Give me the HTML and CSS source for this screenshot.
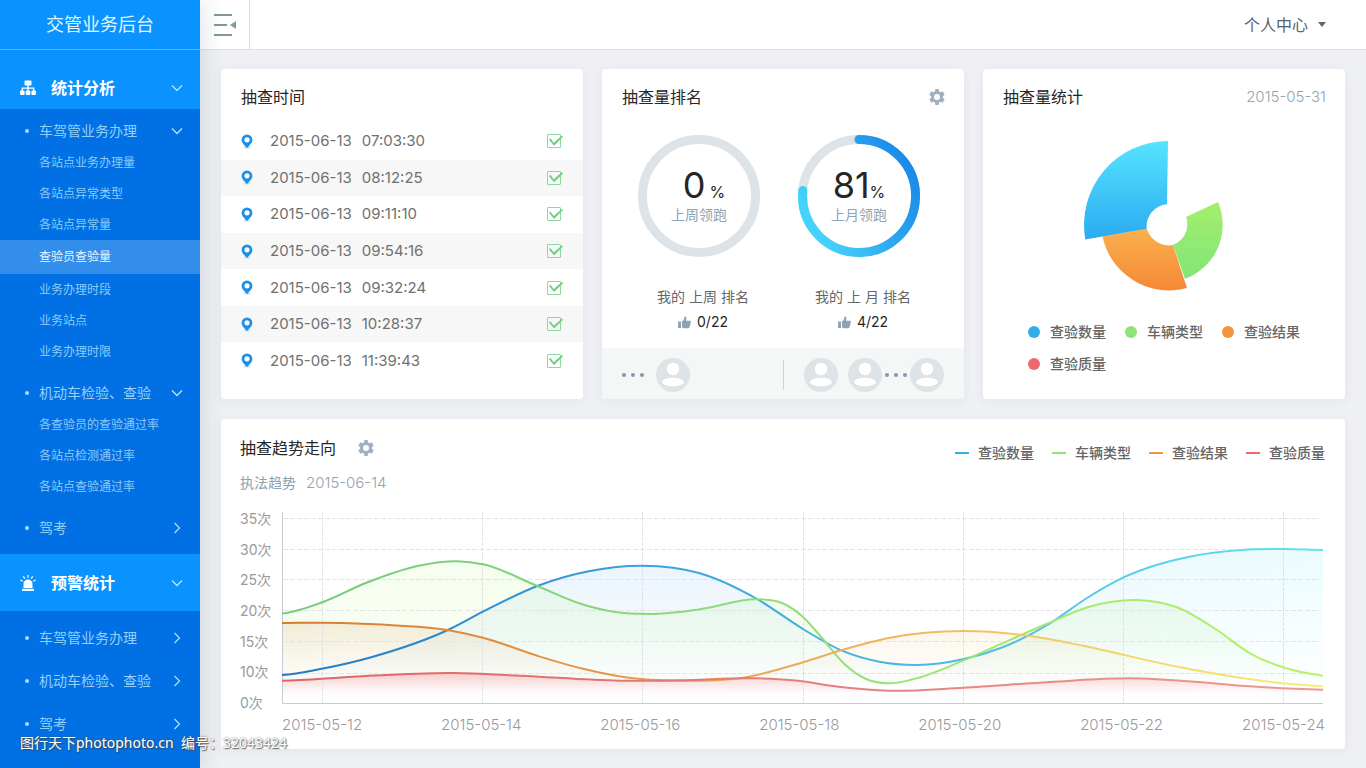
FILE: index.html
```html
<!DOCTYPE html>
<html lang="zh-CN">
<head>
<meta charset="utf-8">
<title>交管业务后台</title>
<link rel="stylesheet" href="styles.css">
</head>
<body>
<svg class="defs" width="0" height="0" aria-hidden="true">
  <symbol id="i-down" viewBox="0 0 12 8"><path d="M1 1.5l5 5 5-5" fill="none" stroke="currentColor" stroke-width="1.3"/></symbol>
  <symbol id="i-right" viewBox="0 0 8 12"><path d="M1.5 1l5 5-5 5" fill="none" stroke="currentColor" stroke-width="1.3"/></symbol>
  <symbol id="i-gear" viewBox="0 0 24 24"><path fill="currentColor" d="M20.900 12c0-.5 0-.9-.1-1.300l2.700-2.200-2.900-5-3.400 1.300c-.7-.5-1.400-.9-2.200-1.200L14.500 0h-5L9 3.600c-.8.3-1.500.7-2.200 1.200L3.400 3.500l-2.900 5 2.700 2.200c-.1.800-.1 1.800 0 2.600L.5 15.500l2.900 5 3.400-1.300c.7.5 1.400.9 2.200 1.200l.5 3.600h5l.5-3.600c.8-.3 1.500-.7 2.200-1.200l3.400 1.300 2.900-5-2.700-2.200c.1-.4.1-.8.1-1.300zM12 16.500a4.500 4.500 0 1 1 0-9 4.500 4.500 0 0 1 0 9z" fill-rule="evenodd"/></symbol>
  <symbol id="i-pin" viewBox="0 0 12 15"><ellipse cx="6" cy="13.600" rx="3.500" ry="1" fill="#bfe3fb"/><path fill="#1e8fe6" fill-rule="evenodd" d="M6 .5a5.400 5.400 0 0 1 5.400 5.400c0 3-3.200 5.600-5.400 8.100C3.800 11.500.6 8.900.6 5.900A5.400 5.400 0 0 1 6 .5zm0 2.700a2.600 2.600 0 1 0 0 5.200 2.600 2.600 0 0 0 0-5.200z"/></symbol>
  <symbol id="i-thumb" viewBox="0 0 13 13"><path fill="currentColor" d="M0 5.500h3V12H0zM4 5.600C5.500 4.600 6.300 3 6.500 .8c.1-.7 1.700-.6 1.900.9.100 1-.2 2-.5 3h3.700c1 0 1.400.7 1.200 1.500l-1.200 4.900c-.2.700-.7 1.100-1.400 1.100H5.600L4 11.500z"/></symbol>
  <symbol id="i-user" viewBox="0 0 34 34"><circle cx="17" cy="17" r="17" fill="#dde3e7"/><circle cx="17" cy="11" r="6.200" fill="#fff"/><ellipse cx="17" cy="24" rx="11" ry="4.300" fill="#fff"/></symbol>
  <symbol id="i-dots" viewBox="0 0 22 4"><g fill="#8698ab"><circle cx="2" cy="2" r="2"/><circle cx="11" cy="2" r="2"/><circle cx="20" cy="2" r="2"/></g></symbol>
</svg>

<div class="app">
  <nav class="sidebar">
    <h1 class="brand">交管业务后台</h1>

    <button class="group group-first" type="button">
      <svg class="group-icon" viewBox="0 0 16 15"><g fill="#fff"><rect x="4.500" y="0" width="7" height="5" rx="1"/><rect x="0" y="10" width="4.600" height="4.500" rx="1"/><rect x="5.700" y="10" width="4.600" height="4.500" rx="1"/><rect x="11.400" y="10" width="4.600" height="4.500" rx="1"/></g><path d="M8 4v7M2.300 11V7.600h11.400V11" fill="none" stroke="#fff" stroke-width="1.400"/></svg>
      <span>统计分析</span>
      <svg class="down"><use href="#i-down"/></svg>
    </button>
    <ul class="menu">
      <li>
        <button class="item" type="button"><span>车驾管业务办理</span><svg class="down"><use href="#i-down"/></svg></button>
        <ul class="sub">
          <li><a href="#">各站点业务办理量</a></li>
          <li><a href="#">各站点异常类型</a></li>
          <li><a href="#">各站点异常量</a></li>
          <li><a href="#" class="active">查验员查验量</a></li>
          <li><a href="#">业务办理时段</a></li>
          <li><a href="#">业务站点</a></li>
          <li><a href="#">业务办理时限</a></li>
        </ul>
      </li>
      <li>
        <button class="item" type="button"><span>机动车检验、查验</span><svg class="down"><use href="#i-down"/></svg></button>
        <ul class="sub">
          <li><a href="#">各查验员的查验通过率</a></li>
          <li><a href="#">各站点检测通过率</a></li>
          <li><a href="#">各站点查验通过率</a></li>
        </ul>
      </li>
      <li><button class="item" type="button"><span>驾考</span><svg class="right"><use href="#i-right"/></svg></button></li>
    </ul>

    <button class="group" type="button">
      <svg class="group-icon" viewBox="0 0 16 16"><path fill="#fff" d="M3.500 13V9a4.500 4.500 0 0 1 9 0v4zM2 13.800h12V16H2z"/><path d="M8 0v2.800M3.300 1.300l1.500 2.300M12.700 1.300l-1.500 2.300M.3 5l2.500 1.300M15.700 5l-2.500 1.300" stroke="#fff" stroke-width="1.200"/></svg>
      <span>预警统计</span>
      <svg class="down"><use href="#i-down"/></svg>
    </button>
    <ul class="menu menu-closed">
      <li><button class="item" type="button"><span>车驾管业务办理</span><svg class="right"><use href="#i-right"/></svg></button></li>
      <li><button class="item" type="button"><span>机动车检验、查验</span><svg class="right"><use href="#i-right"/></svg></button></li>
      <li><button class="item" type="button"><span>驾考</span><svg class="right"><use href="#i-right"/></svg></button></li>
    </ul>
  </nav>

  <div class="page">
    <header class="topbar">
      <button class="collapse" type="button" aria-label="收起菜单">
        <svg width="24" height="22" viewBox="0 0 24 22"><path d="M0 1h18M0 11h13M0 21h18" stroke="#84999f" stroke-width="2"/><path d="M22 7v8l-6-4z" fill="#84999f"/></svg>
      </button>
      <button class="profile" type="button"><span>个人中心</span><svg width="8" height="5" viewBox="0 0 8 5"><path d="M0 0h8L4 5z" fill="#5f6870"/></svg></button>
    </header>

    <main class="content">
      <section class="card">
        <header class="card-head"><h2>抽查时间</h2></header>
        <ul class="times">
          <li><label><svg class="pin"><use href="#i-pin"/></svg><span>2015-06-13</span><span>07:03:30</span><input type="checkbox" checked></label></li>
          <li><label><svg class="pin"><use href="#i-pin"/></svg><span>2015-06-13</span><span>08:12:25</span><input type="checkbox" checked></label></li>
          <li><label><svg class="pin"><use href="#i-pin"/></svg><span>2015-06-13</span><span>09:11:10</span><input type="checkbox" checked></label></li>
          <li><label><svg class="pin"><use href="#i-pin"/></svg><span>2015-06-13</span><span>09:54:16</span><input type="checkbox" checked></label></li>
          <li><label><svg class="pin"><use href="#i-pin"/></svg><span>2015-06-13</span><span>09:32:24</span><input type="checkbox" checked></label></li>
          <li><label><svg class="pin"><use href="#i-pin"/></svg><span>2015-06-13</span><span>10:28:37</span><input type="checkbox" checked></label></li>
          <li><label><svg class="pin"><use href="#i-pin"/></svg><span>2015-06-13</span><span>11:39:43</span><input type="checkbox" checked></label></li>
        </ul>
      </section>

      <section class="card">
        <header class="card-head"><h2>抽查量排名</h2><button class="gear" type="button" aria-label="设置"><svg width="16" height="16"><use href="#i-gear"/></svg></button></header>
        <div class="rings">
          <div class="ring">
            <svg viewBox="0 0 122 122"><circle cx="61" cy="61" r="56.500" fill="none" stroke="#dee3e7" stroke-width="9"/></svg>
            <div class="ring-text"><p class="percent percent-spaced"><b>0</b><span>%</span></p><p class="lead">上周领跑</p></div>
          </div>
          <div class="ring">
            <svg viewBox="0 0 122 122">
              <defs><linearGradient id="arc" x1="0" y1="0.600" x2="0.900" y2="0.100"><stop offset="0" stop-color="#45d3fb"/><stop offset=".5" stop-color="#2eaaf1"/><stop offset="1" stop-color="#1a89e8"/></linearGradient></defs>
              <circle cx="61" cy="61" r="56.500" fill="none" stroke="#dee3e7" stroke-width="9"/>
              <path d="M61 4.500A56.500 56.500 0 1 1 4.800 55.500" fill="none" stroke="url(#arc)" stroke-width="9" stroke-linecap="round"/>
            </svg>
            <div class="ring-text"><p class="percent"><b>81</b><span>%</span></p><p class="lead">上月领跑</p></div>
          </div>
        </div>
        <div class="ranks">
          <div class="rank"><p>我的 上周 排名</p><p class="score"><svg width="13" height="13"><use href="#i-thumb"/></svg>0/22</p></div>
          <div class="rank"><p>我的 上 月 排名</p><p class="score"><svg width="13" height="13"><use href="#i-thumb"/></svg>4/22</p></div>
        </div>
        <footer class="people">
          <div class="people-week"><svg class="dots"><use href="#i-dots"/></svg><svg class="avatar"><use href="#i-user"/></svg></div>
          <div class="people-month"><svg class="avatar"><use href="#i-user"/></svg><div class="more"><svg class="avatar"><use href="#i-user"/></svg><svg class="dots"><use href="#i-dots"/></svg><svg class="avatar"><use href="#i-user"/></svg></div></div>
        </footer>
      </section>

      <section class="card">
        <header class="card-head"><h2>抽查量统计</h2><time>2015-05-31</time></header>
        <svg class="rose" width="160" height="151" viewBox="1084 140 160 151" role="img" aria-label="抽查量统计">
          <defs>
            <linearGradient id="r-blue" x2="0" y2="1"><stop stop-color="#55e4ff"/><stop offset="1" stop-color="#2babf0"/></linearGradient>
            <linearGradient id="r-orange" x2="0" y2="1"><stop stop-color="#fab04e"/><stop offset="1" stop-color="#f58836"/></linearGradient>
            <linearGradient id="r-green" x2="0" y2="1"><stop stop-color="#a4ef6d"/><stop offset="1" stop-color="#81e577"/></linearGradient>
          </defs>
          <path fill="url(#r-green)" d="M1218 202A57.500 57.500 0 0 1 1185 278.800L1173 245A22 22 0 0 0 1186 217z"/>
          <path fill="url(#r-orange)" d="M1102.500 236.500A68 68 0 0 0 1187 288L1173 245A23 23 0 0 1 1146.700 228.500z"/>
          <path fill="url(#r-blue)" d="M1168 141A84 84 0 0 0 1085.300 239.500L1146.700 228.700A22 22 0 0 1 1167 204.300z"/>
        </svg>
        <ul class="legend">
          <li><i class="dot blue"></i>查验数量</li>
          <li><i class="dot green"></i>车辆类型</li>
          <li><i class="dot orange"></i>查验结果</li>
          <li><i class="dot red"></i>查验质量</li>
        </ul>
      </section>

      <section class="card trend">
        <header class="trend-head">
          <div>
            <div class="trend-title"><h2>抽查趋势走向</h2><button class="gear" type="button" aria-label="设置"><svg width="16" height="16"><use href="#i-gear"/></svg></button></div>
            <p class="trend-note"><span>执法趋势</span><time>2015-06-14</time></p>
          </div>
          <ul class="keys">
            <li><i class="dash blue"></i>查验数量</li>
            <li><i class="dash green"></i>车辆类型</li>
            <li><i class="dash orange"></i>查验结果</li>
            <li><i class="dash red"></i>查验质量</li>
          </ul>
        </header>
        <div class="chart">
          <ul class="y-axis"><li>35次</li><li>30次</li><li>25次</li><li>20次</li><li>15次</li><li>10次</li><li>0次</li></ul>
          <svg class="plot" viewBox="0 0 1043 192" role="img" aria-label="抽查趋势走向">
            <defs>
              <linearGradient id="l-blue" gradientUnits="userSpaceOnUse" x2="1041"><stop stop-color="#2678bd"/><stop offset=".35" stop-color="#3aa2dc"/><stop offset=".7" stop-color="#52bfe4"/><stop offset="1" stop-color="#62e4ee"/></linearGradient>
              <linearGradient id="l-green" gradientUnits="userSpaceOnUse" x2="1041"><stop stop-color="#72c87c"/><stop offset=".5" stop-color="#92df7a"/><stop offset="1" stop-color="#b8f368"/></linearGradient>
              <linearGradient id="l-orange" gradientUnits="userSpaceOnUse" x2="1041"><stop stop-color="#d97a2e"/><stop offset=".5" stop-color="#ecab58"/><stop offset="1" stop-color="#f8ed78"/></linearGradient>
              <linearGradient id="l-red" gradientUnits="userSpaceOnUse" x2="1041"><stop stop-color="#de6468"/><stop offset="1" stop-color="#eb9b8f"/></linearGradient>
              <linearGradient id="a-blue" gradientUnits="userSpaceOnUse" x2="1041"><stop stop-color="#4a9ae8"/><stop offset=".5" stop-color="#4fa8ee"/><stop offset="1" stop-color="#5fe6fa"/></linearGradient>
              <linearGradient id="a-green" gradientUnits="userSpaceOnUse" x2="1041"><stop stop-color="#b4f67c"/><stop offset="1" stop-color="#8cea70"/></linearGradient>
              <linearGradient id="f-blue" gradientUnits="userSpaceOnUse" x2="0" y1="35" y2="185"><stop stop-color="#fff"/><stop offset="1" stop-color="#000"/></linearGradient>
              <linearGradient id="f-green" gradientUnits="userSpaceOnUse" x2="0" y1="50" y2="175"><stop stop-color="#fff"/><stop offset=".5" stop-color="#ddd"/><stop offset="1" stop-color="#000"/></linearGradient>
              <linearGradient id="f-orange" gradientUnits="userSpaceOnUse" x2="0" y1="108" y2="175"><stop stop-color="#fff"/><stop offset="1" stop-color="#000"/></linearGradient>
              <linearGradient id="f-red" gradientUnits="userSpaceOnUse" x2="0" y1="160" y2="182"><stop stop-color="#fff"/><stop offset="1" stop-color="#000"/></linearGradient>
              <mask id="m-blue" maskUnits="userSpaceOnUse" x="0" y="0" width="1043" height="192"><rect width="1043" height="192" fill="url(#f-blue)"/></mask>
              <mask id="m-green" maskUnits="userSpaceOnUse" x="0" y="0" width="1043" height="192"><rect width="1043" height="192" fill="url(#f-green)"/></mask>
              <mask id="m-orange" maskUnits="userSpaceOnUse" x="0" y="0" width="1043" height="192"><rect width="1043" height="192" fill="url(#f-orange)"/></mask>
              <mask id="m-red" maskUnits="userSpaceOnUse" x="0" y="0" width="1043" height="192"><rect width="1043" height="192" fill="url(#f-red)"/></mask>
            </defs>
            <g id="areas"></g>
            <path class="grid-lines" d="M1 6.500H1038M1 37.500H1038M1 67.500H1038M1 98.500H1038M1 129.500H1038M1 161.500H1038"/>
            <path class="grid-columns" d="M40.500 0V191M200.500 0V191M360.500 0V191M521.500 0V191M681.500 0V191M841.500 0V191M1001.500 0V191"/>
            <path class="axes" d="M.5 0V191.500H1041"/>
            <g id="lines"></g>
          </svg>
          <ul class="x-axis"><li>2015-05-12</li><li>2015-05-14</li><li>2015-05-16</li><li>2015-05-18</li><li>2015-05-20</li><li>2015-05-22</li><li>2015-05-24</li></ul>
        </div>
      </section>
    </main>
  </div>
  <p class="watermark">图行天下photophoto.cn&nbsp; 编号：32043424</p>
</div>
<script src="chart.js"></script>
</body>
</html>
```
FILE: styles.css
```css
* { box-sizing: border-box; margin: 0; padding: 0; }
body {
  font-family: Inter, "Noto Sans CJK SC", sans-serif;
  font-size: 14px;
  line-height: 20px;
  color: #666;
  background: #eef0f4;
}
ul { list-style: none; }
button { font: inherit; color: inherit; background: none; border: 0; cursor: pointer; }
a { color: inherit; text-decoration: none; }
svg { display: block; flex: none; }
.defs { position: absolute; }

.app { display: flex; min-height: 100vh; position: relative; overflow: hidden; }

/* sidebar */
.sidebar {
  flex: none;
  width: 200px;
  z-index: 1;
  background: #0070e4;
  color: #a2dcff;
  box-shadow: 0 0 24px rgba(40, 45, 60, .16);
}
.brand {
  height: 50px;
  border-bottom: 1px solid #55b4fb;
  background: #0a93ff;
  color: #e0f6ff;
  font-size: 18px;
  font-weight: 400;
  line-height: 49px;
  text-align: center;
}
.group {
  display: flex;
  align-items: center;
  width: 100%;
  height: 57px;
  padding: 0 17px 0 20px;
  background: #0a93ff;
  color: #fff;
  font-size: 16px;
  font-weight: 700;
}
.group-first { height: 59px; padding-top: 17px; }
.group-icon { width: 16px; height: 16px; margin-right: 15px; }
.down { width: 12px; height: 8px; margin-left: auto; color: #b5e6ff; }
.right { width: 8px; height: 12px; margin: 0 2px 0 auto; color: #a5e2ff; }
.menu { display: flex; flex-direction: column; gap: 10px; padding: 6px 0 10px; }
.menu-closed { gap: 11px; padding-top: 11px; }
.item { display: flex; align-items: center; width: 100%; height: 32px; padding: 0 17px 0 25px; color: #93cffb; }
.item::before { content: ""; width: 4px; height: 4px; margin-right: 10px; border-radius: 50%; background: #a2e0ff; }
.sub a { display: block; padding-left: 39px; color: #8bcbfa; font-size: 12px; line-height: 32px; margin-bottom: -1px; }
.sub .active { background: #338deb; color: #e6f7ff; line-height: 34px; margin-bottom: 0; }

/* top bar */
.page { flex: 1; min-width: 0; }
.topbar { display: flex; justify-content: space-between; height: 50px; border-bottom: 1px solid #dfe1e6; background: #fff; }
.collapse { padding: 0 11px 0 14px; border-right: 1px solid #d9dde2; }
.profile { display: flex; align-items: center; gap: 10px; padding: 0 40px 0 20px; font-size: 16px; color: #59626a; }

/* cards */
.content { display: grid; grid-template-columns: repeat(3, 1fr); gap: 20px 19px; padding: 19px 21px; }
.card {
  display: flex;
  flex-direction: column;
  min-width: 0;
  border-radius: 4px;
  background: #fff;
  box-shadow: 0 2px 12px rgba(60, 70, 100, .06);
  overflow: hidden;
}
.card-head { display: flex; justify-content: space-between; align-items: center; padding: 17px 19px 15px 20px; line-height: 22px; }
h2 { color: #262626; font-size: 16px; font-weight: 400; line-height: 22px; }
.gear { color: #a0b0be; }
time { color: #93a3b1; font-size: 15px; font-weight: 300; }

.times { display: flex; flex: 1; flex-direction: column; padding-bottom: 20px; }
.times li { display: flex; flex: 1; align-items: center; }
.times li:nth-child(even) { background: #f7f7f7; }
.times label { display: flex; flex: 1; align-items: center; gap: 10px; padding: 0 22px 0 20px; color: #707070; font-size: 15px; }
.pin { width: 12px; height: 15px; margin-right: 7px; }
.times input {
  position: relative;
  width: 14px;
  height: 14px;
  margin-left: auto;
  border: 1px solid #8fd79c;
  border-radius: 1px;
  appearance: none;
}
.times input:checked::after {
  content: "";
  position: absolute;
  left: 1px;
  top: 0;
  width: 14px;
  height: 11px;
  background: #6fcf80;
  clip-path: polygon(0 40%, 10% 27%, 34% 68%, 93% 2%, 100% 14%, 36% 95%);
}

.rings { display: flex; justify-content: center; gap: 38px; padding: 12px 8px 0 0; }
.ring { display: grid; width: 122px; }
.ring > * { grid-area: 1 / 1; }
.ring-text { padding-top: 30px; text-align: center; }
.percent { height: 40px; color: #262626; font-size: 16px; line-height: 40px; }
.percent b { font-size: 36px; font-weight: 400; }
.percent-spaced { padding-left: 10px; }
.percent-spaced b { margin-right: 4px; }
.lead { color: #8ea3b6; }
.ranks { display: flex; justify-content: center; gap: 38px; padding: 30px 0 16px; }
.rank { width: 122px; text-align: center; white-space: nowrap; }
.score { display: flex; justify-content: center; align-items: center; gap: 6px; margin-top: 5px; color: #262626; }
.score svg { color: #8fa3b5; }
.people { display: flex; align-items: center; height: 51px; margin-top: auto; padding: 2px 20px 0; background: #f5f6f6; }
.people > div { display: flex; flex: 1; align-items: center; height: 30px; }
.people-week { gap: 12px; border-right: 1px solid #cdd3d8; }
.people-month { justify-content: flex-end; gap: 10px; }
.more { display: flex; align-items: center; gap: 3px; }
.avatar { width: 34px; height: 34px; }
.dots { width: 22px; height: 4px; }

.rose { align-self: center; margin-top: 17px; }
.legend {
  display: grid;
  grid-template-columns: repeat(3, max-content);
  justify-content: center;
  gap: 12px 19px;
  padding: 31px 0 20px;
  font-weight: 500;
}
.legend li, .keys li { display: flex; align-items: center; }
.dot { width: 12px; height: 12px; margin-right: 10px; border-radius: 50%; background: currentColor; }
.dash { width: 14px; height: 2px; margin-right: 9px; background: currentColor; }
.blue { color: #31ade9; }
.green { color: #8de578; }
.orange { color: #f39540; }
.red { color: #ed6a6c; }

/* trend */
.trend { grid-column: 1 / -1; padding: 18px 20px 14px 19px; }
.trend-head { display: flex; justify-content: space-between; align-items: flex-start; }
.trend-title { display: flex; align-items: center; gap: 22px; }
.trend-note { display: flex; gap: 10px; margin-top: 14px; color: #8da0ae; }
.trend-note time { font-size: 15px; }
.keys { display: flex; gap: 18px; padding-top: 6px; font-weight: 500; }
.chart { display: grid; grid-template-columns: 42px 1fr; margin-top: 16px; color: #999; }
.y-axis { display: flex; flex-direction: column; justify-content: space-between; }
.y-axis li:last-child { color: #8d9fae; }
.plot { width: 100%; height: auto; margin: 3px 0 9px; overflow: visible; }
.grid-lines { fill: none; stroke: #e2e4e6; stroke-dasharray: 5 2; }
.grid-columns { fill: none; stroke: #d9dde0; stroke-dasharray: 4 1; stroke-opacity: .8; }
.axes { fill: none; stroke: #c5cad6; }
.x-axis { display: flex; grid-column: 2; justify-content: space-between; margin-top: 2px; font-size: 15px; font-weight: 300; }
#lines path { fill: none; stroke-width: 2; }

.watermark {
  position: absolute;
  left: 20px;
  top: 733px;
  z-index: 2;
  color: #fff;
  font-family: "Noto Sans", "Noto Sans CJK SC", sans-serif;
  text-shadow: 0 0 2px #555, 1px 1px 1px rgba(60, 60, 60, .7);
  white-space: nowrap;
}
```
FILE: chart.js
```js
const series = [
  { name: 'blue', fill: 'url(#a-blue)', opacity: 0.13, points: [[0,163],[41,156.500],[91,144.700],[168,117],[201,99.700],[256,73.700],[308,59],[360,53.700],[418,61.300],[475,87],[521,117],[560,138.700],[596,149.500],[635,153],[681,147.300],[718,136.300],[768,111.300],[805,86],[841,65.700],[911,44],[960,38],[1001,37],[1041,38]] },
  { name: 'green', fill: 'url(#a-green)', opacity: 0.12, points: [[0,101.500],[41,90],[85,70.500],[138,53.500],[175,49.300],[201,52.300],[256,74.300],[301,92.500],[332,99.800],[368,102],[418,97.300],[478,87.300],[500,91],[521,105],[540,126],[563,152.500],[583,166.500],[606,171.300],[631,167.300],[681,148.700],[718,132.300],[768,110.500],[808,94.500],[855,88],[895,95.300],[935,118],[968,141.300],[1001,155.300],[1041,163.700]] },
  { name: 'orange', fill: 'url(#l-orange)', opacity: 0.14, points: [[0,111],[41,110.700],[118,113.700],[165,118],[201,125.700],[256,144],[301,156.800],[345,165.500],[398,168.700],[461,165.700],[521,150.300],[560,138],[608,125.700],[681,119],[748,124],[801,133.700],[898,155.300],[1001,171.300],[1041,174.300]] },
  { name: 'red', fill: '#f56565', opacity: 0.3, points: [[0,168.700],[71,164.700],[171,161],[238,163.700],[338,168.700],[398,168.300],[475,166.300],[511,168.300],[561,175.300],[606,178.700],[681,175.700],[768,170],[848,166.300],[925,170.700],[968,174.300],[1041,177.700]] }
];

/* Cubic curve through the points; each tangent blends the slopes of the two adjoining segments. */
function curve(points) {
  const rise = (i) => (points[i + 1][1] - points[i][1]) / (points[i + 1][0] - points[i][0]);
  const last = points.length - 1;
  const slope = points.map((p, i) => {
    if (i === 0) return rise(0) * 0.3;
    if (i === last) return rise(last - 1) * 0.6;
    const before = p[0] - points[i - 1][0];
    const after = points[i + 1][0] - p[0];
    return (rise(i - 1) * after + rise(i) * before) / (before + after);
  });
  let d = 'M' + points[0];
  for (let i = 1; i <= last; i++) {
    const [x0, y0] = points[i - 1];
    const [x1, y1] = points[i];
    const h = (x1 - x0) / 3;
    d += `C${x0 + h},${y0 + slope[i - 1] * h} ${x1 - h},${y1 - slope[i] * h} ${x1},${y1}`;
  }
  return d;
}

function addPath(parent, attributes) {
  const path = document.createElementNS('http://www.w3.org/2000/svg', 'path');
  for (const key in attributes) path.setAttribute(key, attributes[key]);
  document.getElementById(parent).append(path);
}

for (const s of series) {
  const d = curve(s.points);
  addPath('areas', { d: d + 'V191H0z', fill: s.fill, 'fill-opacity': s.opacity, mask: `url(#m-${s.name})` });
}
for (const name of ['blue', 'green', 'orange', 'red']) {
  const s = series.find(item => item.name === name);
  addPath('lines', { d: curve(s.points), stroke: `url(#l-${name})` });
}
```
